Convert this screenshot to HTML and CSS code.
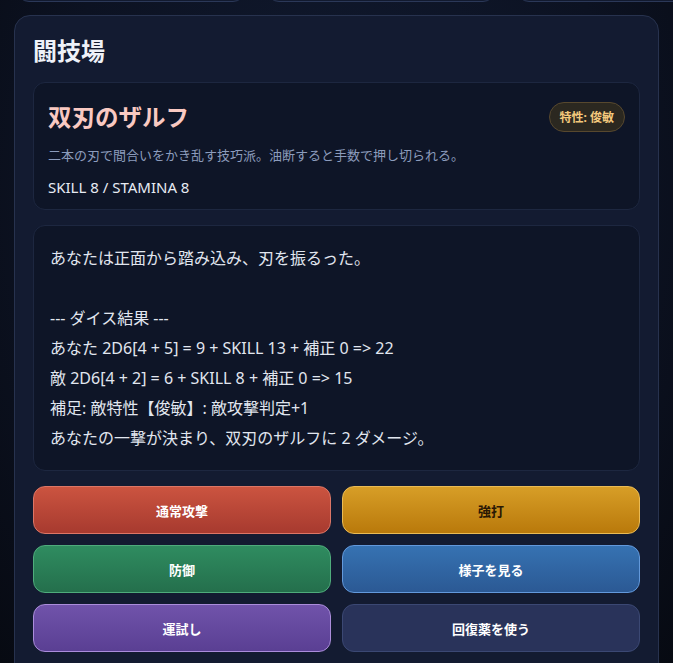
FILE: index.html
```html
<!DOCTYPE html>
<html lang="ja">
<head>
<meta charset="UTF-8" />
<meta name="viewport" content="width=device-width, initial-scale=1" />
<title>闘技場</title>
<link rel="stylesheet" href="styles.css">
</head>
<body>
  <div class="page">
    <div class="status-row">
      <div class="status-card"></div>
      <div class="status-card"></div>
      <div class="status-card"></div>
    </div>

    <section class="arena">
      <h2 class="arena-title">闘技場</h2>

      <div class="enemy">
        <div class="enemy-head">
          <h3 class="enemy-name">双刃のザルフ</h3>
          <span class="trait">特性: 俊敏</span>
        </div>
        <p class="enemy-desc">二本の刃で間合いをかき乱す技巧派。油断すると手数で押し切られる。</p>
        <p class="enemy-stats">SKILL 8 / STAMINA 8</p>
      </div>

      <div class="log">あなたは正面から踏み込み、刃を振るった。

--- ダイス結果 ---
あなた 2D6[4 + 5] = 9 + SKILL 13 + 補正 0 =&gt; 22
敵 2D6[4 + 2] = 6 + SKILL 8 + 補正 0 =&gt; 15
補足: 敵特性【俊敏】: 敵攻撃判定+1
あなたの一撃が決まり、双刃のザルフに 2 ダメージ。</div>

      <div class="actions">
        <button class="act attack">通常攻撃</button>
        <button class="act heavy">強打</button>
        <button class="act guard">防御</button>
        <button class="act watch">様子を見る</button>
        <button class="act luck">運試し</button>
        <button class="act potion">回復薬を使う</button>
      </div>
    </section>
  </div>
</body>
</html>
```

FILE: styles.css
```css
* {
  box-sizing: border-box;
}
html, body {
  margin: 0;
  height: 100%;
}
body {
  background: radial-gradient(ellipse at 50% 30%, #111a30 0%, #0c1222 60%, #070a12 100%);
  color: #e3e8f2;
  font-family: "Noto Sans", "Noto Sans CJK JP", sans-serif;
  overflow: hidden;
}
.page {
  padding: 0 14px;
}
/* summary cards above the arena, scrolled mostly out of view */
.status-row {
  display: flex;
  gap: 22px;
  height: 80px;
  margin: -78px -14px 0 3px;
  overflow: hidden;
}
.status-card {
  flex: 0 0 228px;
  background: #121a2f;
  border: 1px solid #2b3858;
  border-radius: 12px;
}
.arena {
  margin-top: 13px;
  width: 645px;
  background: #131b31;
  border: 1px solid #27324e;
  border-radius: 16px;
  padding: 18px 18px 30px;
  display: flex;
  flex-direction: column;
  gap: 15px;
}
.arena-title {
  margin: 0;
  font-size: 24px;
  line-height: 33px;
  font-weight: 700;
  color: #eef1f8;
}
.enemy {
  background: #0e1527;
  border: 1px solid #1d2740;
  border-radius: 12px;
  padding: 15px 14px 12px;
  display: flex;
  flex-direction: column;
}
.enemy-head {
  display: flex;
  align-items: center;
  justify-content: space-between;
  height: 36px;
}
.enemy-name {
  margin: 0;
  font-size: 23.5px;
  font-weight: 700;
  color: #f9c9c2;
}
.trait {
  font-size: 12px;
  font-weight: 700;
  color: #f3c87c;
  background: #2b2820;
  border: 1px solid #57482e;
  border-radius: 999px;
  padding: 5px 10px;
  margin-top: 1px;
}
.enemy-desc {
  margin: 12px 0 0;
  font-size: 13px;
  line-height: 18px;
  color: #8c9cbc;
}
.enemy-stats {
  margin: 13px 0 0;
  font-size: 15px;
  line-height: 20px;
  color: #e7ebf3;
}
.log {
  background: #0e1527;
  border: 1px solid #1d2740;
  border-radius: 12px;
  padding: 17px 16px;
  font-size: 16px;
  line-height: 30px;
  color: #e1e6ef;
  white-space: pre-wrap;
}
.actions {
  display: grid;
  grid-template-columns: repeat(2, 1fr);
  gap: 11px;
}
.act {
  height: 48px;
  border-radius: 12px;
  border: 1px solid;
  font-family: inherit;
  font-size: 13px;
  font-weight: 700;
  color: #fff;
  cursor: pointer;
}
.attack {
  background: linear-gradient(#cb5440, #a73a2f);
  border-color: #dc7666;
}
.heavy {
  background: linear-gradient(#d79e27, #b9790b);
  border-color: #eabb55;
  color: #2a1804;
}
.guard {
  background: linear-gradient(#2f8c60, #246f4c);
  border-color: #4fac7c;
}
.watch {
  background: linear-gradient(#3672b2, #2b5994);
  border-color: #6399db;
}
.luck {
  background: linear-gradient(#7053aa, #5a3f93);
  border-color: #ab8ddb;
}
.potion {
  background: #29335a;
  border-color: #3b4873;
}
```
